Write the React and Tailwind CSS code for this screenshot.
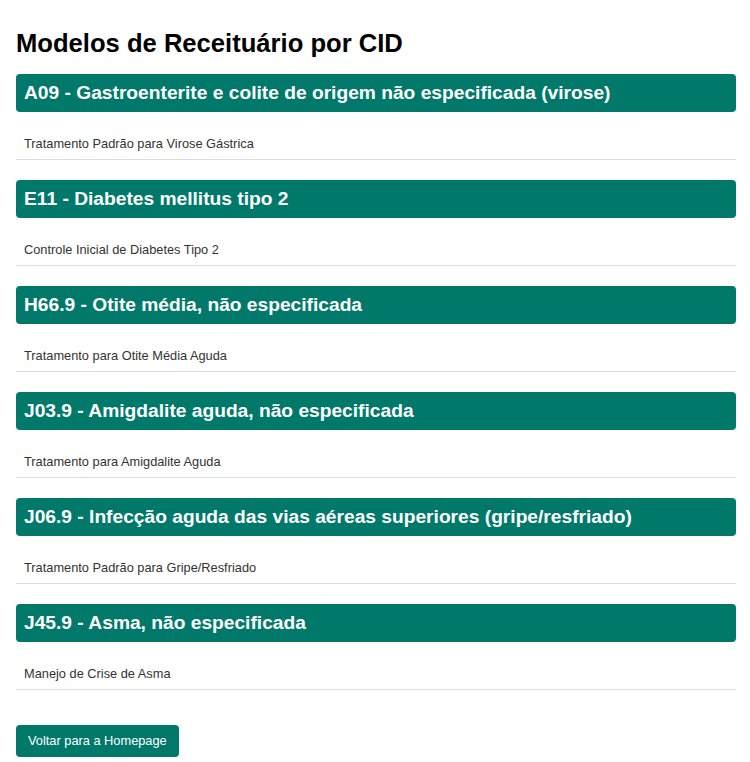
import React from 'react';

const modelos = [
  { cid: 'A09 - Gastroenterite e colite de origem não especificada (virose)', nome: 'Tratamento Padrão para Virose Gástrica' },
  { cid: 'E11 - Diabetes mellitus tipo 2', nome: 'Controle Inicial de Diabetes Tipo 2' },
  { cid: 'H66.9 - Otite média, não especificada', nome: 'Tratamento para Otite Média Aguda' },
  { cid: 'J03.9 - Amigdalite aguda, não especificada', nome: 'Tratamento para Amigdalite Aguda' },
  { cid: 'J06.9 - Infecção aguda das vias aéreas superiores (gripe/resfriado)', nome: 'Tratamento Padrão para Gripe/Resfriado' },
  { cid: 'J45.9 - Asma, não especificada', nome: 'Manejo de Crise de Asma' },
];

const App = () => {
  return (
    <div className="min-h-screen bg-white px-4 pt-[29px] pb-4 font-['Liberation_Sans',Arial,sans-serif]">
      <div className="w-[720px]">
        <h1 className="text-[25.6px] leading-[29px] font-bold text-black mb-4">
          Modelos de Receituário por CID
        </h1>

        {modelos.map((m) => (
          <div key={m.cid} className="mb-5">
            <h2 className="bg-[#00796b] text-white text-[19.2px] leading-[22px] font-bold px-2 py-2 rounded">
              {m.cid}
            </h2>
            <ul className="mt-4">
              <li className="px-2 py-2 text-[12.8px] leading-[15px] text-[#333] border-b border-[#ddd]">
                {m.nome}
              </li>
            </ul>
          </div>
        ))}

        <button className="mt-[15px] bg-[#00796b] text-white text-[12.8px] leading-4 px-3 py-2 rounded">
          Voltar para a Homepage
        </button>
      </div>
    </div>
  );
};

export default App;
